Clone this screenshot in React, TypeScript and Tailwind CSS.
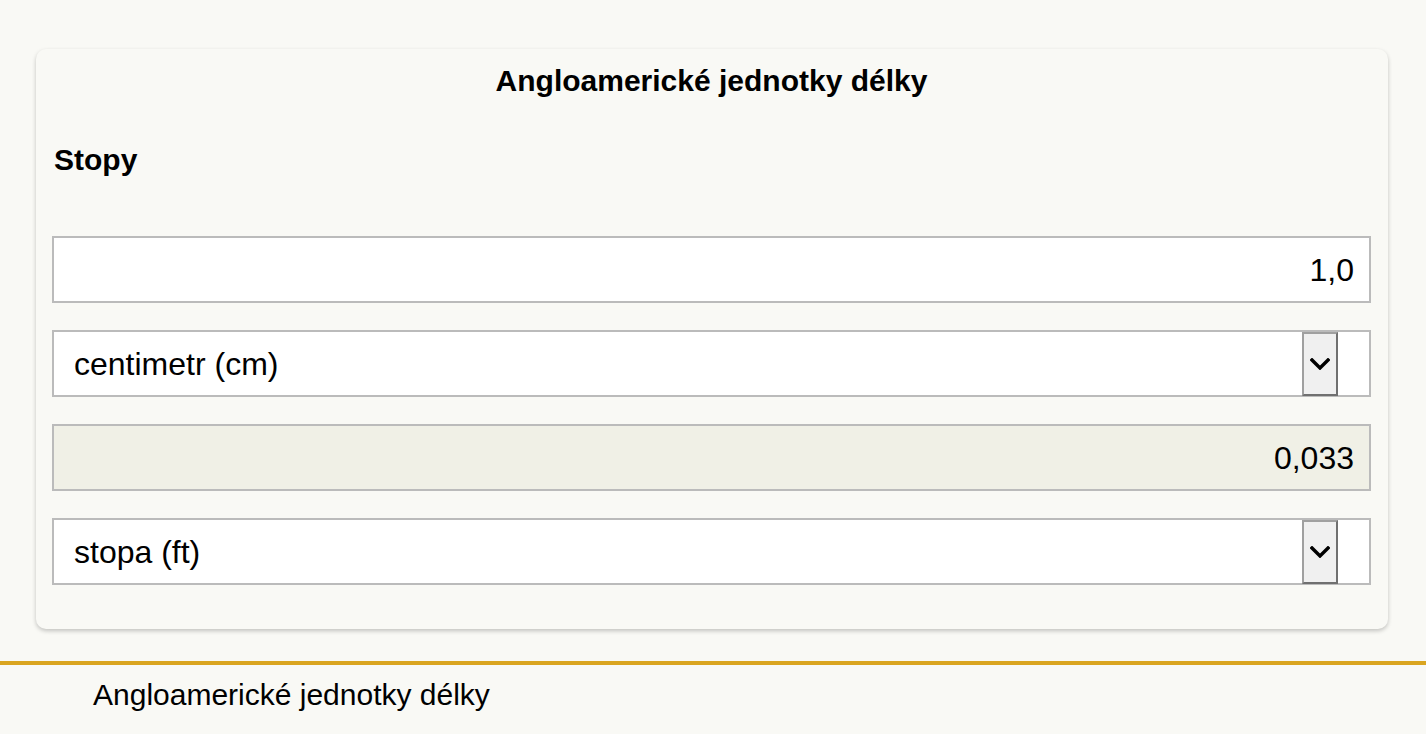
import React from 'react';

const Chevron: React.FC = () => (
  <svg width="20" height="12" viewBox="0 0 20 12" fill="none">
    <path d="M2 2l8 8 8-8" stroke="#000" strokeWidth={3.4} strokeLinecap="square" />
  </svg>
);

const UnitSelect: React.FC<{ label: string }> = ({ label }) => (
  <div className="flex h-[67px] items-center border-2 border-[#bbbbbb] bg-white pl-5 pr-[31px]">
    <span className="flex-1 text-[32px] leading-none text-black">{label}</span>
    <div className="flex h-[64px] w-[36px] items-center justify-center border-2 border-t-[#a0a0a0] border-l-[#a0a0a0] border-r-[#707070] border-b-[#707070] bg-[#f0f0f0]">
      <Chevron />
    </div>
  </div>
);

const App: React.FC = () => {
  return (
    <div className="min-h-[734px] bg-[#f9f9f5] font-['Liberation_Sans',Arial,sans-serif] text-black">
      <div className="pl-[36px] pr-[38px] pt-[49px]">
        <div className="rounded-[10px] bg-[#f9f9f5] pl-4 pr-[17px] pt-[14px] pb-[44px] shadow-[0_2px_4px_rgba(0,0,0,0.22)]">
          <h1 className="text-center text-[30px] font-bold leading-[36px]">Angloamerické jednotky délky</h1>
          <h2 className="mt-[43px] pl-[2px] text-[30px] font-bold leading-[36px]">Stopy</h2>

          <div className="mt-[58px] flex flex-col gap-[27px]">
            <div className="flex h-[67px] items-center justify-end border-2 border-[#bbbbbb] bg-white pr-[15px] text-[32px] leading-none">
              1,0
            </div>
            <UnitSelect label="centimetr (cm)" />
            <div className="flex h-[67px] items-center justify-end border-2 border-[#bbbbbb] bg-[#f0f0e6] pr-[15px] text-[32px] leading-none">
              0,033
            </div>
            <UnitSelect label="stopa (ft)" />
          </div>
        </div>
      </div>

      <div className="mt-[32px] border-t-4 border-[#daa520] pt-[12px] pl-[93px]">
        <p className="text-[30px] leading-[36px]">Angloamerické jednotky délky</p>
      </div>
    </div>
  );
};

export default App;
